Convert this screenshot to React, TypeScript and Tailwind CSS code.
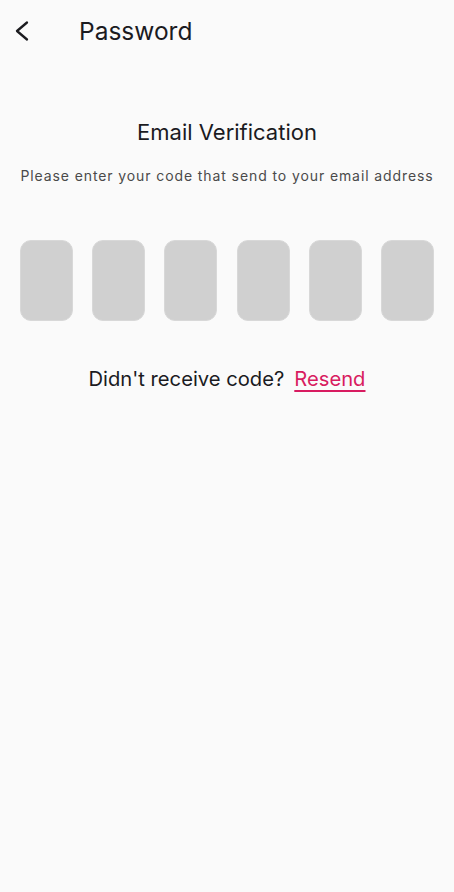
export default function App() {
  return (
    <div className="min-h-[892px] w-full bg-[#fafafa] text-[#1b1b1f]" style={{ fontFamily: "Inter, 'Noto Sans', sans-serif" }}>
      <header className="flex h-[62px] items-center pl-[12px]">
        <button className="flex h-10 w-[18px] items-center justify-center">
          <svg width="16" height="22" viewBox="0 0 16 22" fill="none" stroke="currentColor" strokeWidth="2.3" strokeLinecap="round" strokeLinejoin="round">
            <path d="M14 2.5 4 11l10 8.5" />
          </svg>
        </button>
        <h1 className="ml-[49px] text-[24.5px] leading-none">Password</h1>
      </header>

      <main className="flex flex-col items-center pt-[56px]">
        <h2 className="text-[22px] leading-7">Email Verification</h2>
        <p className="mt-[19px] text-[14px] tracking-[0.9px] text-[#4a4a4a]">
          Please enter your code that send to your email address
        </p>

        <div className="mt-[54px] flex w-full justify-between px-5">
          {[0, 1, 2, 3, 4, 5].map((i) => (
            <div key={i} className="h-[81px] w-[53px] rounded-[11px] border border-[#d8d8d8] bg-[#d0d0d0]" />
          ))}
        </div>

        <div className="mt-[43px] flex items-center gap-[10px] text-[20.2px]">
          <span>Didn't receive code?</span>
          <a href="#" className="text-[#d81b60] underline underline-offset-4">
            Resend
          </a>
        </div>
      </main>
    </div>
  )
}
